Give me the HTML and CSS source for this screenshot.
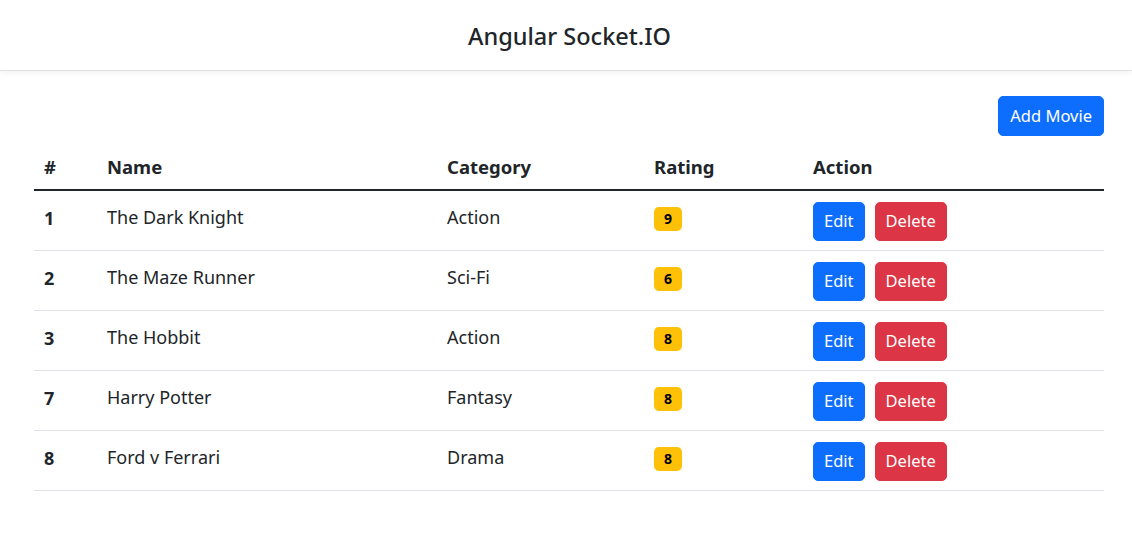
FILE: index.html
```html
<!DOCTYPE html>
<html lang="en">
<head>
<meta charset="utf-8">
<title>Angular Socket.IO</title>
<link rel="stylesheet" href="styles.css">
</head>
<body>
<header class="navbar">
  <h1 class="brand">Angular Socket.IO</h1>
</header>
<main class="content">
  <div class="toolbar">
    <button class="btn btn-primary">Add Movie</button>
  </div>
  <table class="movies">
    <thead>
      <tr>
        <th class="c-id">#</th>
        <th class="c-name">Name</th>
        <th class="c-cat">Category</th>
        <th class="c-rate">Rating</th>
        <th class="c-act">Action</th>
      </tr>
    </thead>
    <tbody>
      <tr>
        <td class="id">1</td><td>The Dark Knight</td><td>Action</td>
        <td><span class="badge">9</span></td>
        <td><div class="actions"><button class="btn btn-primary">Edit</button><button class="btn btn-danger">Delete</button></div></td>
      </tr>
      <tr>
        <td class="id">2</td><td>The Maze Runner</td><td>Sci-Fi</td>
        <td><span class="badge">6</span></td>
        <td><div class="actions"><button class="btn btn-primary">Edit</button><button class="btn btn-danger">Delete</button></div></td>
      </tr>
      <tr>
        <td class="id">3</td><td>The Hobbit</td><td>Action</td>
        <td><span class="badge">8</span></td>
        <td><div class="actions"><button class="btn btn-primary">Edit</button><button class="btn btn-danger">Delete</button></div></td>
      </tr>
      <tr>
        <td class="id">7</td><td>Harry Potter</td><td>Fantasy</td>
        <td><span class="badge">8</span></td>
        <td><div class="actions"><button class="btn btn-primary">Edit</button><button class="btn btn-danger">Delete</button></div></td>
      </tr>
      <tr>
        <td class="id">8</td><td>Ford v Ferrari</td><td>Drama</td>
        <td><span class="badge">8</span></td>
        <td><div class="actions"><button class="btn btn-primary">Edit</button><button class="btn btn-danger">Delete</button></div></td>
      </tr>
    </tbody>
  </table>
</main>
</body>
</html>
```

FILE: styles.css
```css
* { box-sizing: border-box; }

body {
  margin: 0;
  font-family: "Noto Sans", "Open Sans", sans-serif;
  font-size: 18px;
  color: #212529;
  background: #fff;
}

.navbar {
  height: 71px;
  display: flex;
  align-items: center;
  justify-content: center;
  background: #fff;
  border-bottom: 1px solid #e3e3e3;
  box-shadow: 0 2px 6px rgba(0, 0, 0, 0.06);
}

.brand {
  margin: 0;
  font-size: 23.5px;
  font-weight: 500;
  line-height: 1.2;
  padding-top: 2px;
  padding-left: 7px;
}

.content {
  padding: 25px 28px 0 34px;
}

.toolbar {
  display: flex;
  justify-content: flex-end;
  margin-bottom: 10px;
}

.btn {
  font-family: inherit;
  font-size: 16.5px;
  line-height: 24px;
  padding: 6px 11px 7px;
  border: 1px solid transparent;
  border-radius: 5px;
  color: #fff;
  cursor: pointer;
}

.toolbar .btn { padding-top: 7px; }

.btn-primary { background: #0d6efd; border-color: #0d6efd; }
.btn-danger { background: #dc3545; border-color: #dc3545; }

.actions .btn { padding-left: 10px; padding-right: 10px; }

.movies {
  width: 100%;
  border-collapse: collapse;
  table-layout: fixed;
}

.c-id { width: 65px; }
.c-name { width: 340px; }
.c-cat { width: 207px; }
.c-rate { width: 159px; }

.movies th {
  text-align: left;
  font-weight: 700;
  font-size: 18.5px;
  padding: 8px 8px 9px 8px;
  line-height: 26px;
  border-bottom: 2px solid #212529;
}

.movies th.c-id { padding-left: 10px; }

.movies td {
  vertical-align: top;
  padding: 13px 8px 0 8px;
  height: 60px;
  line-height: 26px;
  border-bottom: 1px solid #dee2e6;
}

.movies td.id { font-weight: 700; padding-left: 10px; padding-top: 14px; }

.badge {
  display: inline-flex;
  align-items: center;
  justify-content: center;
  width: 28px;
  height: 24px;
  margin-top: 3px;
  border-radius: 5px;
  background: #ffc107;
  color: #000;
  font-size: 14px;
  font-weight: 700;
}

.actions {
  display: flex;
  gap: 10px;
  margin-top: -2px;
}
```
